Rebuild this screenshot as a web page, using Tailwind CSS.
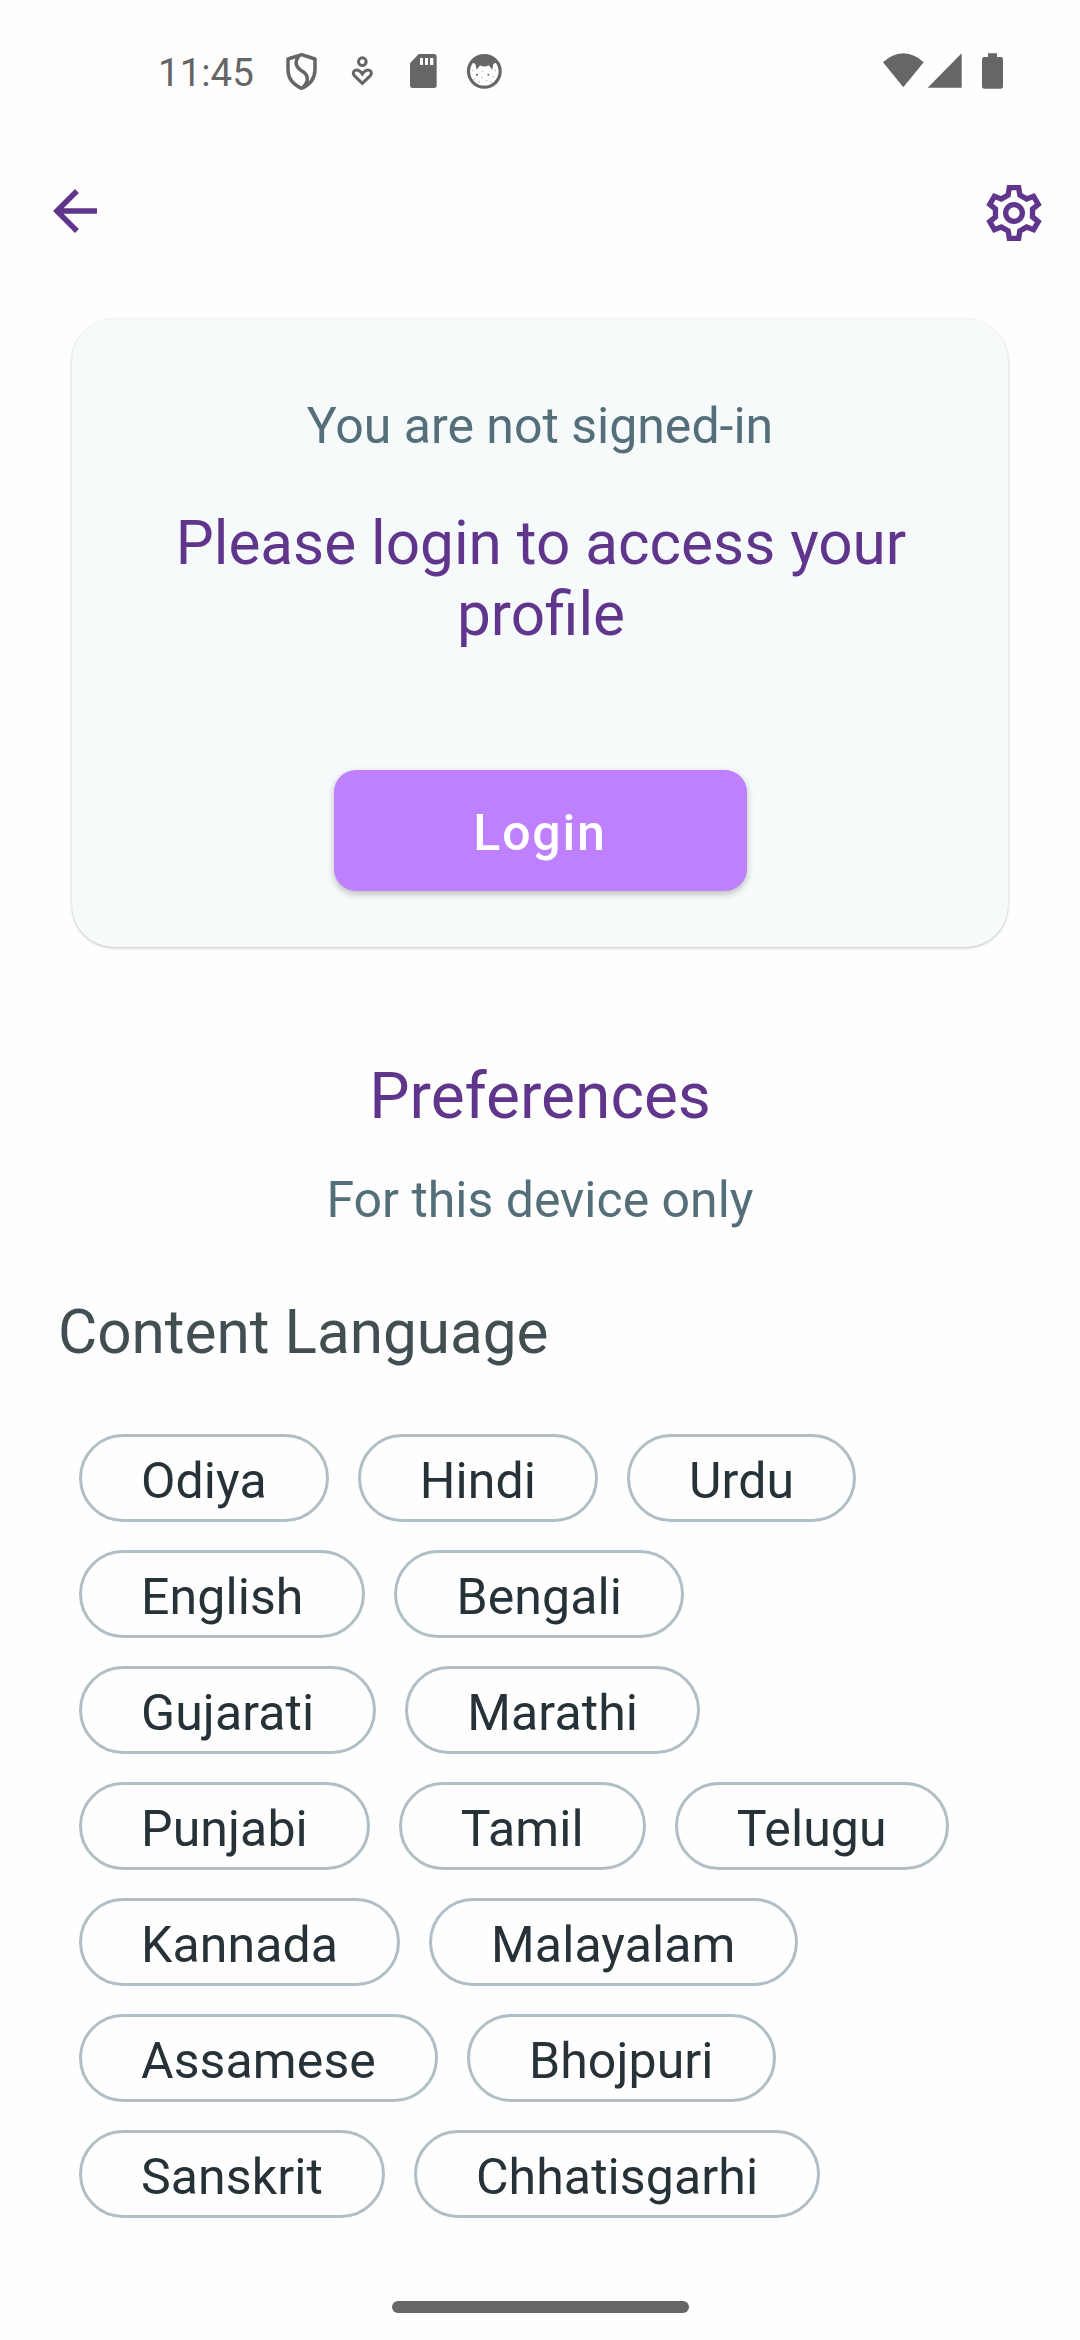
<!DOCTYPE html>
<html lang="en">
<head>
<meta charset="utf-8">
<title>Profile</title>
<script src="https://cdn.jsdelivr.net/npm/@tailwindcss/browser@4"></script>
</head>
<body class="bg-[#fefefe]">
<div class="flex h-[2340px] w-[1080px] flex-col overflow-hidden bg-[#fefefe] font-['Roboto',sans-serif]">

  <!-- Status bar -->
  <div class="flex h-[143px] shrink-0 items-center justify-between pl-[158px] pr-[76px] text-[#666]">
    <div class="flex items-center">
      <span class="w-[126px] pt-[3px] text-[38.5px] leading-[46px]">11:45</span>
      <svg class="h-[39px] w-9" viewBox="432 36 108 117" fill="none" stroke="currentColor" stroke-width="10.5" stroke-linejoin="round"><path d="M485 44L525 57V88C525 118 506 136 485 145C464 136 444 118 444 88V57Z"/><path d="M477 48C461 68 469 82 487 94C506 106 507 122 489 143"/></svg>
      <svg class="ml-[30px] h-[39px] w-[26px]" viewBox="630 36 78 117" fill="none" stroke="currentColor" stroke-width="9"><circle cx="667" cy="65" r="11.5"/><path d="M667 130L643 107C636 99 641 90 650 90C659 90 663 96 667 102C671 96 676 90 684 90C693 90 698 99 691 107Z"/></svg>
      <svg class="ml-[34px] h-[39px] w-[27px]" viewBox="810 36 81 117" fill="currentColor"><path fill-rule="evenodd" d="M836 42H882Q890 42 890 50V136Q890 144 882 144H818Q810 144 810 136V70ZM840 54V75H849V54ZM855 54V75H864V54ZM870 54V75H880V54Z"/></svg>
      <svg class="ml-[29px] h-[39px] w-[37px]" viewBox="978 36 111 117" fill="currentColor"><circle cx="1033" cy="94" r="47.5" fill="none" stroke="currentColor" stroke-width="9.5"/><path d="M994 66A48 48 0 0 1 1072 66L1060 72L1057 89L1046 76Q1033 83 1020 76L1010 89L1006 72Z"/><circle cx="1011" cy="104" r="3"/><circle cx="1045" cy="104" r="3"/><g opacity=".55"><circle cx="999" cy="92" r="2"/><circle cx="1028" cy="94" r="2"/><circle cx="1066" cy="92" r="2"/><circle cx="1060" cy="110" r="2"/><circle cx="1026" cy="113" r="2"/><circle cx="1003" cy="117" r="2"/><circle cx="1040" cy="122" r="2"/><circle cx="1018" cy="126" r="2"/><circle cx="1053" cy="126" r="2"/></g></svg>
    </div>
    <div class="flex items-center">
      <svg class="h-[39px] w-[43px]" viewBox="66 36 129 117" fill="currentColor"><path d="M69 67Q96 41 130 40Q164 41 191 67L130 142Z"/></svg>
      <svg class="ml-0.5 h-[39px] w-9" viewBox="201 36 108 117" fill="currentColor"><path d="M203 143L305 40V143Z"/></svg>
      <svg class="ml-[18px] h-[39px] w-[23px]" viewBox="363 36 69 117" fill="currentColor"><path d="M384 40H411V51H422Q429 51 429 58V140Q429 146 422 146H373Q366 146 366 140V58Q366 51 373 51H384Z"/></svg>
    </div>
  </div>

  <!-- App bar -->
  <div class="flex h-[138px] shrink-0 items-center justify-between pl-[42px] pr-[36px] text-[#60358c]">
    <svg class="mb-[2px] size-[66px]" viewBox="0 0 24 24" fill="currentColor"><path d="M20 11H7.83l5.59-5.59L12 4l-8 8 8 8 1.41-1.41L7.83 13H20v-2z"/></svg>
    <svg class="mt-[2px] size-[60px]" viewBox="-90 -90 180 180" fill="none" stroke="currentColor" stroke-width="16"><path d="M-14-76L14-76L17.5-54L38-42.2L58.8-50.1L72.8-25.9L55.5-11.8L55.5 11.8L72.8 25.9L58.8 50.1L38 42.2L17.5 54L14 76L-14 76L-17.5 54L-38 42.2L-58.8 50.1L-72.8 25.9L-55.5 11.8L-55.5-11.8L-72.8-25.9L-58.8-50.1L-38-42.2L-17.5-54Z"/><circle r="25"/></svg>
  </div>

  <!-- Sign-in card -->
  <div class="mx-[72px] mt-[38px] flex h-[628px] shrink-0 flex-col items-center rounded-[42px] bg-[#f6fafb] pt-[77px] text-center shadow-[0_1px_3px_rgba(0,0,0,0.25)]">
    <div class="text-[50px] leading-[60px] text-[#546e7a]">You are not signed-in</div>
    <div class="mt-[52px] w-[780px] pl-[2px] text-[60.25px] leading-[71px] text-[#60358c]">Please login to access your profile</div>
    <button class="mt-[120px] h-[121px] w-[413px] rounded-[22px] bg-[#bf80ff] pt-[5px] text-[50px] font-medium tracking-[1.8px] text-white shadow-[0_3px_7px_rgba(0,0,0,0.25)]">Login</button>
  </div>

  <!-- Preferences -->
  <div class="mt-[112px] text-center text-[64px] leading-[76px] text-[#60358c]">Preferences</div>
  <div class="mt-[35px] text-center text-[50px] leading-[60px] text-[#546e7a]">For this device only</div>
  <div class="mt-[67px] pl-[58px] text-[60.25px] leading-[71px] text-[#414e52]">Content Language</div>

  <div class="mt-[66px] ml-[79px] flex w-[915px] flex-wrap gap-x-[29px] gap-y-7 text-[50px] leading-[76px] tracking-[0.1px] text-[#263238] *:h-[88px] *:rounded-full *:border-3 *:border-[#b0bec5] *:px-[59px] *:pt-1.5">
    <div>Odiya</div>
    <div>Hindi</div>
    <div>Urdu</div>
    <div>English</div>
    <div>Bengali</div>
    <div>Gujarati</div>
    <div>Marathi</div>
    <div>Punjabi</div>
    <div>Tamil</div>
    <div>Telugu</div>
    <div>Kannada</div>
    <div>Malayalam</div>
    <div>Assamese</div>
    <div>Bhojpuri</div>
    <div>Sanskrit</div>
    <div>Chhatisgarhi</div>
  </div>

  <!-- Gesture bar -->
  <div class="mx-auto mt-auto mb-[27px] h-[12px] w-[297px] shrink-0 rounded-full bg-[#666]"></div>
</div>
</body>
</html>
